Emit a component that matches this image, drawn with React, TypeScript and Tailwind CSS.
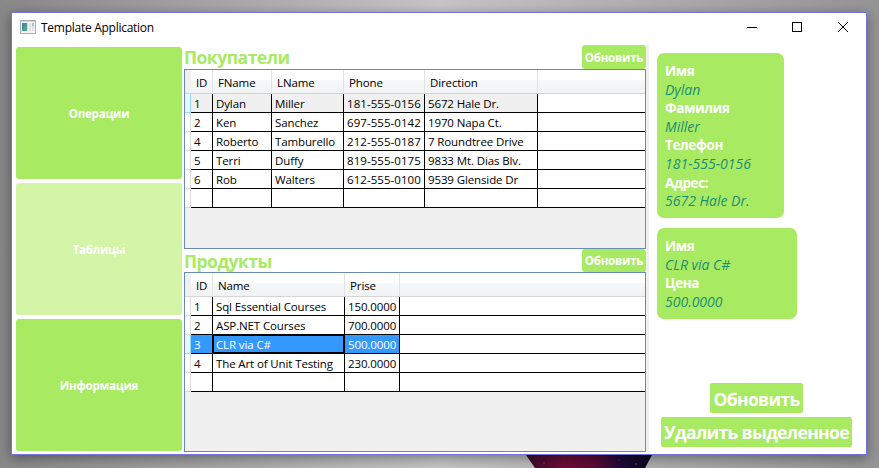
import type { ReactNode } from "react";

type Column = { title: string; width: string; numeric?: boolean };
type Row = { cells: string[]; state?: "current" | "selected" };

const customers: Column[] = [
  { title: "ID", width: "w-[22px]" },
  { title: "FName", width: "w-[59px]" },
  { title: "LName", width: "w-[72px]" },
  { title: "Phone", width: "w-[81px]", numeric: true },
  { title: "Direction", width: "w-[113px]" },
];

const customerRows: Row[] = [
  { cells: ["1", "Dylan", "Miller", "181-555-0156", "5672 Hale Dr."], state: "current" },
  { cells: ["2", "Ken", "Sanchez", "697-555-0142", "1970 Napa Ct."] },
  { cells: ["4", "Roberto", "Tamburello", "212-555-0187", "7 Roundtree Drive"] },
  { cells: ["5", "Terri", "Duffy", "819-555-0175", "9833 Mt. Dias Blv."] },
  { cells: ["6", "Rob", "Walters", "612-555-0100", "9539 Glenside Dr"] },
  { cells: ["", "", "", "", ""] },
];

const products: Column[] = [
  { title: "ID", width: "w-[22px]" },
  { title: "Name", width: "w-[132px]" },
  { title: "Prise", width: "w-[55px]" },
];

const productRows: Row[] = [
  { cells: ["1", "Sql Essential Courses", "150.0000"] },
  { cells: ["2", "ASP.NET Courses", "700.0000"] },
  { cells: ["3", "CLR via C#", "500.0000"], state: "selected" },
  { cells: ["4", "The Art of Unit Testing", "230.0000"] },
  { cells: ["", "", ""] },
];

function DataGrid({ columns, rows }: { columns: Column[]; rows: Row[] }) {
  return (
    <div className="h-[180px] border border-[#688caf] bg-[#f0f0f0] text-[11.5px] leading-[18px] tracking-[-0.12px] text-black">
      <div className="flex h-6 border-b border-[#d5d5d5] bg-linear-to-b from-white from-45% via-[#f7f8fa] via-45% to-[#f1f2f4]">
        <div className="w-[6px] shrink-0 bg-[#f0f0f0]" />
        {columns.map((c) => (
          <div
            key={c.title}
            className={`${c.width} shrink-0 border-r border-[#e2e3e5] pl-[5px] pt-[4px] whitespace-nowrap`}
          >
            {c.title}
          </div>
        ))}
      </div>
      {rows.map((row, r) => (
        <div key={r} className="flex h-[19px]">
          <div
            className={`w-[6px] shrink-0 border-r border-b ${
              row.state ? "border-[#98d8f5] bg-[#e8f6fd]" : "border-[#dcdcdc] bg-white"
            }`}
          />
          {columns.map((c, i) => {
            const fill =
              row.state === "selected"
                ? "bg-[#3399ff] text-white"
                : row.state === "current"
                  ? "bg-[#f0f0f0]"
                  : "bg-white";
            const focus = row.state === "selected" && i === 1 ? "shadow-[inset_0_0_0_1px_#000]" : "";
            return (
              <div
                key={c.title}
                className={`${c.width} ${fill} ${focus} ${c.numeric ? "tracking-[0.06px]" : ""} h-[19px] shrink-0 border-r border-b border-black pt-px pl-[3px] whitespace-nowrap`}
              >
                {row.cells[i]}
              </div>
            );
          })}
          <div className="grow border-b border-black bg-white" />
        </div>
      ))}
    </div>
  );
}

function TableHeading({ title, height }: { title: string; height: string }) {
  return (
    <div className={`${height} flex justify-between`}>
      <h2 className="text-[17.5px] leading-[25px] font-bold tracking-[-0.5px] text-[#a8eb62]">{title}</h2>
      <button className="w-16 rounded-[3px] bg-[#a8eb62] pt-px text-[11.5px] font-bold tracking-[-0.2px] text-white">
        Обновить
      </button>
    </div>
  );
}

function NavButton({ children, active }: { children: ReactNode; active?: boolean }) {
  return (
    <button
      className={`h-[132px] rounded-[3px] pt-[2px] text-[11.5px] font-bold tracking-[-0.2px] text-white ${active ? "bg-[#d4f4a7]" : "bg-[#a8eb62]"}`}
    >
      {children}
    </button>
  );
}

function InfoCard({ items, size }: { items: [string, string][]; size: string }) {
  return (
    <dl className={`${size} rounded-[7px] bg-[#a8eb62] px-2 pt-[9px] text-[14px] leading-[18.6px]`}>
      {items.map(([label, value]) => (
        <div key={label}>
          <dt className="text-[13.5px] font-bold tracking-[-0.4px] text-white">{label}</dt>
          <dd className="text-[#1c8f75] italic">{value}</dd>
        </div>
      ))}
    </dl>
  );
}

function AppIcon() {
  return (
    <svg className="mt-[7px]" width="16" height="14" viewBox="0 0 16 14">
      <defs>
        <linearGradient id="pane" x1="0" y1="0" x2="1" y2="1">
          <stop offset="0" stopColor="#3f78a8" />
          <stop offset="1" stopColor="#58b58a" />
        </linearGradient>
      </defs>
      <rect x="0.5" y="0.5" width="15" height="13" fill="#f4f5f6" stroke="#a7afb5" />
      <rect x="1" y="1" width="14" height="1" fill="#cfd5da" />
      <rect x="2" y="3" width="5" height="8" fill="url(#pane)" />
      <rect x="7" y="3" width="1" height="8" fill="#c9dcd8" />
      <rect x="9" y="3" width="2" height="8" fill="#dfe2e2" />
      <rect x="12" y="3" width="2" height="3" fill="#9ec5cb" />
      <rect x="12" y="6" width="2" height="5" fill="#e1e3e3" />
    </svg>
  );
}

function Wallpaper() {
  return (
    <svg className="absolute top-[455px] left-[526px]" width="126" height="13" viewBox="0 0 126 13">
      <defs>
        <linearGradient id="nebula">
          <stop offset="0" stopColor="#3b0b2b" />
          <stop offset="0.3" stopColor="#6e0c36" />
          <stop offset="0.55" stopColor="#5b0a36" />
          <stop offset="0.75" stopColor="#1e0838" />
          <stop offset="1" stopColor="#0b0620" />
        </linearGradient>
      </defs>
      <path d="M0 0H126L119 13H9Z" fill="url(#nebula)" />
      <circle cx="110" cy="9" r="0.8" fill="#8a6a45" />
      <circle cx="93" cy="5" r="0.8" fill="#473080" />
      <circle cx="18" cy="8" r="0.8" fill="#8c3048" />
    </svg>
  );
}

export default function App() {
  return (
    <div className="relative h-[468px] w-[879px] overflow-hidden bg-linear-to-r from-[#888888] via-[#c6c6c6] to-[#949494] pt-3 pl-[11px] font-['Open_Sans','Noto_Sans',sans-serif]">
      <Wallpaper />
      <div className="relative flex h-[443px] w-[856px] flex-col border border-[#7272d8] bg-white shadow-[0_3px_12px_rgba(0,0,0,0.4)]">
        <header className="flex h-8 shrink-0 items-start pl-2">
          <AppIcon />
          <h1 className="mt-[5px] ml-[5px] text-[12px] leading-[19px] tracking-[-0.27px] text-black">
            Template Application
          </h1>
          <svg
            className="ml-auto"
            width="136"
            height="28"
            viewBox="0 0 136 28"
            fill="none"
            stroke="#000"
            shapeRendering="crispEdges"
          >
            <path d="M17 14.5h10M62.5 9.5h9v9h-9z" />
            <path d="M108 9l10 10M118 9l-10 10" shapeRendering="auto" />
          </svg>
        </header>
        <div className="flex">
          <nav className="mt-[2px] ml-1 flex w-[166px] flex-col gap-1">
            <NavButton>Операции</NavButton>
            <NavButton active>Таблицы</NavButton>
            <NavButton>Информация</NavButton>
          </nav>
          <main className="ml-[2px] w-[462px]">
            <TableHeading title="Покупатели" height="h-6" />
            <DataGrid columns={customers} rows={customerRows} />
            <TableHeading title="Продукты" height="h-[23px]" />
            <DataGrid columns={products} rows={productRows} />
          </main>
          <div className="w-[3px] bg-[#f0f0f0]" />
          <aside className="flex h-[407px] grow flex-col pt-2">
            <div className="ml-2 flex flex-col gap-[10px]">
              <InfoCard
                size="h-[165px] w-[127px]"
                items={[
                  ["Имя", "Dylan"],
                  ["Фамилия", "Miller"],
                  ["Телефон", "181-555-0156"],
                  ["Адрес:", "5672 Hale Dr."],
                ]}
              />
              <InfoCard
                size="h-[91px] w-[140px]"
                items={[
                  ["Имя", "CLR via C#"],
                  ["Цена", "500.0000"],
                ]}
              />
            </div>
            <div className="mt-auto mr-[14px] mb-[5px] ml-3 flex flex-col items-center gap-1 text-[17.5px] font-bold tracking-[-0.65px] text-white">
              <button className="h-[30px] w-[93px] rounded-[2px] bg-[#a8eb62] pt-[2px] leading-[28px]">Обновить</button>
              <button className="h-[30px] w-[191px] rounded-[2px] bg-[#a8eb62] leading-[30px] whitespace-nowrap">
                Удалить выделенное
              </button>
            </div>
          </aside>
        </div>
      </div>
    </div>
  );
}
